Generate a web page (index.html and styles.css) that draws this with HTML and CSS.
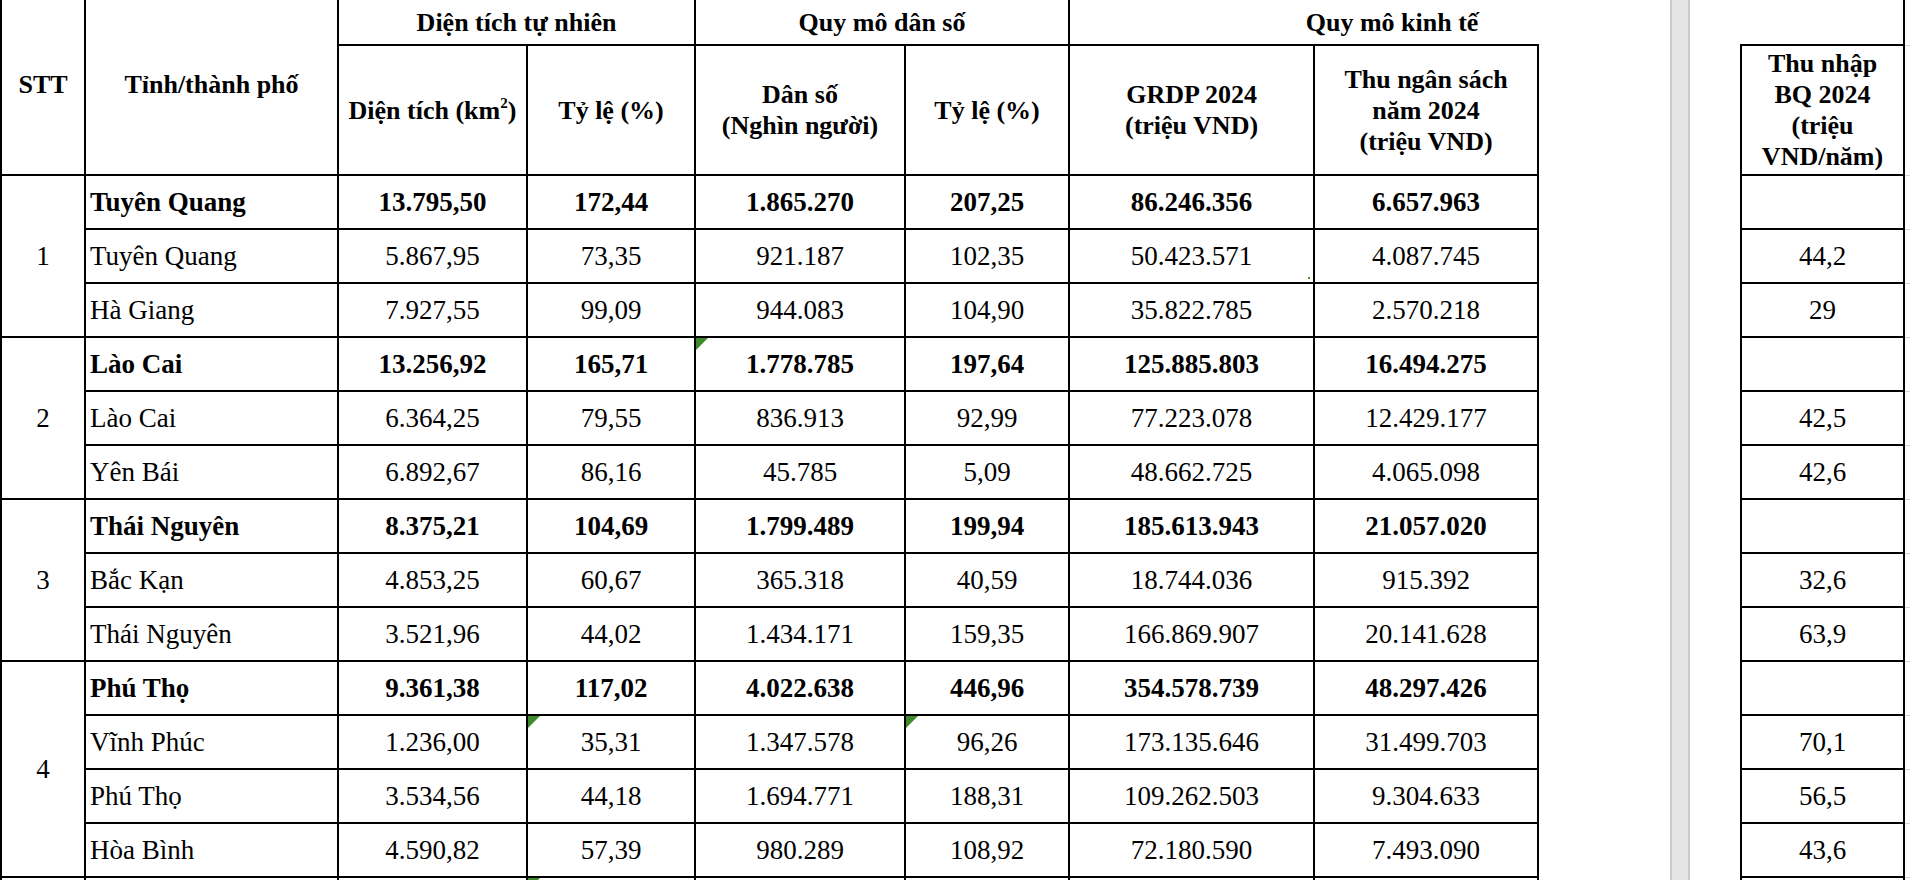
FILE: index.html
```html
<!DOCTYPE html>
<html lang="vi">
<head>
<meta charset="utf-8">
<title>Bảng số liệu</title>
<link rel="stylesheet" href="styles.css">
</head>
<body>
<div class="sheet">
  <table class="main">
    <colgroup>
      <col class="c-stt"><col class="c-name"><col class="c-dt"><col class="c-tl1"><col class="c-ds"><col class="c-tl2"><col class="c-grdp"><col class="c-thu">
    </colgroup>
    <thead>
      <tr class="h1">
        <th rowspan="2" class="tall">STT</th>
        <th rowspan="2" class="tall">Tỉnh/thành phố</th>
        <th colspan="2">Diện tích tự nhiên</th>
        <th colspan="2">Quy mô dân số</th>
        <th colspan="2" class="open-right">Quy mô kinh tế</th>
      </tr>
      <tr class="h2">
        <th>Diện tích (km<sup>2</sup>)</th>
        <th>Tỷ lệ (%)</th>
        <th>Dân số<br>(Nghìn người)</th>
        <th>Tỷ lệ (%)</th>
        <th>GRDP 2024<br>(triệu VND)</th>
        <th>Thu ngân sách<br>năm 2024<br>(triệu VND)</th>
      </tr>
    </thead>
    <tbody>
      <tr class="total">
        <td rowspan="3" class="stt">1</td>
        <td class="name">Tuyên Quang</td><td>13.795,50</td><td>172,44</td><td>1.865.270</td><td>207,25</td><td>86.246.356</td><td>6.657.963</td>
      </tr>
      <tr>
        <td class="name">Tuyên Quang</td><td>5.867,95</td><td>73,35</td><td>921.187</td><td>102,35</td><td class="dot">50.423.571</td><td>4.087.745</td>
      </tr>
      <tr>
        <td class="name">Hà Giang</td><td>7.927,55</td><td>99,09</td><td>944.083</td><td>104,90</td><td>35.822.785</td><td>2.570.218</td>
      </tr>
      <tr class="total">
        <td rowspan="3" class="stt">2</td>
        <td class="name">Lào Cai</td><td>13.256,92</td><td>165,71</td><td class="flag">1.778.785</td><td>197,64</td><td>125.885.803</td><td>16.494.275</td>
      </tr>
      <tr>
        <td class="name">Lào Cai</td><td>6.364,25</td><td>79,55</td><td>836.913</td><td>92,99</td><td>77.223.078</td><td>12.429.177</td>
      </tr>
      <tr>
        <td class="name">Yên Bái</td><td>6.892,67</td><td>86,16</td><td>45.785</td><td>5,09</td><td>48.662.725</td><td>4.065.098</td>
      </tr>
      <tr class="total">
        <td rowspan="3" class="stt">3</td>
        <td class="name">Thái Nguyên</td><td>8.375,21</td><td>104,69</td><td>1.799.489</td><td>199,94</td><td>185.613.943</td><td>21.057.020</td>
      </tr>
      <tr>
        <td class="name">Bắc Kạn</td><td>4.853,25</td><td>60,67</td><td>365.318</td><td>40,59</td><td>18.744.036</td><td>915.392</td>
      </tr>
      <tr>
        <td class="name">Thái Nguyên</td><td>3.521,96</td><td>44,02</td><td>1.434.171</td><td>159,35</td><td>166.869.907</td><td>20.141.628</td>
      </tr>
      <tr class="total">
        <td rowspan="4" class="stt">4</td>
        <td class="name">Phú Thọ</td><td>9.361,38</td><td>117,02</td><td>4.022.638</td><td>446,96</td><td>354.578.739</td><td>48.297.426</td>
      </tr>
      <tr>
        <td class="name">Vĩnh Phúc</td><td>1.236,00</td><td class="flag">35,31</td><td>1.347.578</td><td class="flag">96,26</td><td>173.135.646</td><td>31.499.703</td>
      </tr>
      <tr>
        <td class="name">Phú Thọ</td><td>3.534,56</td><td>44,18</td><td>1.694.771</td><td>188,31</td><td>109.262.503</td><td>9.304.633</td>
      </tr>
      <tr>
        <td class="name">Hòa Bình</td><td>4.590,82</td><td>57,39</td><td>980.289</td><td>108,92</td><td>72.180.590</td><td>7.493.090</td>
      </tr>
      <tr class="total">
        <td class="stt"></td>
        <td class="name"></td><td></td><td class="flag"></td><td></td><td></td><td></td><td></td>
      </tr>
    </tbody>
  </table>

  <div class="divider"></div>

  <table class="side">
    <colgroup><col class="s-val"><col class="s-stub"></colgroup>
    <tbody>
      <tr class="h1"><td class="spacer"></td><td class="stub"></td></tr>
      <tr class="h2"><th>Thu nhập<br>BQ 2024<br>(triệu<br>VND/năm)</th><td class="stub"></td></tr>
      <tr><td></td><td class="stub"></td></tr>
      <tr><td>44,2</td><td class="stub"></td></tr>
      <tr><td>29</td><td class="stub"></td></tr>
      <tr><td></td><td class="stub"></td></tr>
      <tr><td>42,5</td><td class="stub"></td></tr>
      <tr><td>42,6</td><td class="stub"></td></tr>
      <tr><td></td><td class="stub"></td></tr>
      <tr><td>32,6</td><td class="stub"></td></tr>
      <tr><td>63,9</td><td class="stub"></td></tr>
      <tr><td></td><td class="stub"></td></tr>
      <tr><td>70,1</td><td class="stub"></td></tr>
      <tr><td>56,5</td><td class="stub"></td></tr>
      <tr><td>43,6</td><td class="stub"></td></tr>
      <tr><td></td><td class="stub"></td></tr>
    </tbody>
  </table>
</div>
</body>
</html>
```

FILE: styles.css
```css
html, body {
  margin: 0;
  padding: 0;
  background: #ffffff;
  overflow: hidden;
  height: 880px;
}

body {
  font-family: "Liberation Serif", "Times New Roman", serif;
  color: #000;
}

.sheet {
  display: flex;
  align-items: flex-start;
  width: 1910px;
  height: 880px;
  overflow: hidden;
}

table {
  border-collapse: collapse;
  table-layout: fixed;
  flex: none;
}

th, td {
  border: 2px solid #000;
  padding: 0;
  text-align: center;
  vertical-align: middle;
}

th {
  font-weight: bold;
  font-size: 26px;
  line-height: 31px;
}

td {
  font-size: 27px;
  line-height: 30px;
}

sup {
  font-size: 15px;
  line-height: 0;
  vertical-align: 11px;
}

/* main table */
.main {
  width: 1539px;
}

.c-stt { width: 84px; }
.c-name { width: 253px; }
.c-dt { width: 189px; }
.c-tl1 { width: 168px; }
.c-ds { width: 210px; }
.c-tl2 { width: 164px; }
.c-grdp { width: 245px; }
.c-thu { width: 224px; }

.h1 { height: 45px; }
.h1 th, .h1 td { border-top: none; }
.h2 { height: 130px; }
tbody tr { height: 54px; }

.tall { padding-bottom: 5px; }

/* merged title runs on past the table edge in the sheet */
.open-right {
  border-right: none;
  padding-left: 176px;
}

.name {
  text-align: left;
  padding-left: 4px;
}

.total td { font-weight: bold; }
.total td.stt { font-weight: normal; }

.flag, .dot { position: relative; }

.flag::before {
  content: "";
  position: absolute;
  top: 0;
  left: 0;
  width: 0;
  height: 0;
  border-top: 12px solid #3f8a2b;
  border-right: 12px solid transparent;
}

.dot::after {
  content: "";
  position: absolute;
  right: 3px;
  bottom: 3px;
  width: 2px;
  height: 2px;
  background: #4c8a3c;
}

/* spreadsheet split divider */
.divider {
  flex: none;
  width: 16px;
  height: 880px;
  margin-left: 131px;
  background: #e5e5e5;
  border-left: 2px solid #c9c9c9;
  border-right: 2px solid #c9c9c9;
}

/* side table */
.side {
  width: 169px;
  margin-left: 50px;
}

.s-val { width: 163px; }
.s-stub { width: 6px; }

.side .spacer {
  border-left: none;
  border-top: none;
}

.side .h2 th {
  font-size: 26px;
  line-height: 31px;
}

.side td.stub {
  border-left: none;
  border-right: none;
  border-top: 1px solid #d2d2d2;
  border-bottom: 1px solid #d2d2d2;
}

.side .h1 td.stub {
  border-top: none;
}
```
